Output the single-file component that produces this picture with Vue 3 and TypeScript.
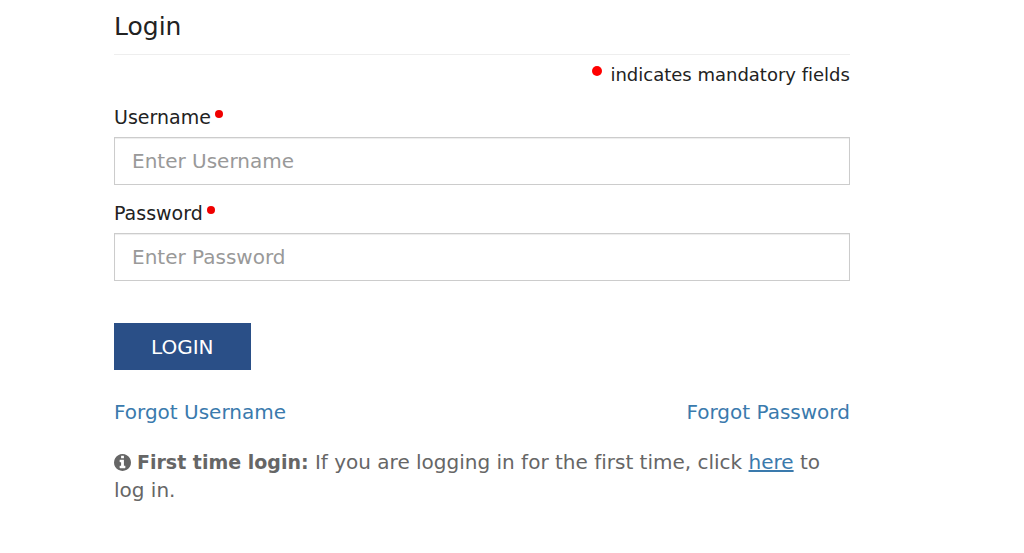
<script setup lang="ts">
import { ref } from 'vue'

const username = ref<string>('')
const password = ref<string>('')
</script>

<template>
  <main class="page">
    <form class="login" @submit.prevent>
      <h1 class="title">Login</h1>
      <p class="note"><span class="dot large"></span>indicates mandatory fields</p>

      <label class="label" for="username">Username<span class="dot"></span></label>
      <input id="username" v-model="username" class="field" type="text" placeholder="Enter Username" />

      <label class="label" for="password">Password<span class="dot"></span></label>
      <input id="password" v-model="password" class="field" type="password" placeholder="Enter Password" />

      <button class="submit" type="submit">LOGIN</button>

      <nav class="links">
        <a href="#">Forgot Username</a>
        <a href="#">Forgot Password</a>
      </nav>

      <p class="info">
        <svg class="icon" viewBox="0 0 1536 1536" aria-hidden="true">
          <path fill="currentColor" d="M1024 1248v-160q0-14-9-23t-23-9h-96V544q0-14-9-23t-23-9H544q-14 0-23 9t-9 23v160q0 14 9 23t23 9h96v320h-96q-14 0-23 9t-9 23v160q0 14 9 23t23 9h448q14 0 23-9t9-23zM896 352V192q0-14-9-23t-23-9H672q-14 0-23 9t-9 23v160q0 14 9 23t23 9h192q14 0 23-9t9-23zM1536 768q0 209-103 385.500T1153.500 1433 768 1536t-385.500-103T103 1153.500 0 768t103-385.500T382.500 103 768 0t385.500 103T1433 382.500 1536 768z" />
        </svg>
        <strong>First time login:</strong> If you are logging in for the first time, click <a href="#">here</a> to log in.
      </p>
    </form>
  </main>
</template>

<style>
body {
  margin: 0;
  background: #fff;
}
</style>

<style scoped>
.page {
  box-sizing: border-box;
  padding: 9px 17% 0 114px;
  font-family: "DejaVu Sans", Verdana, sans-serif;
  font-size: 20px;
  font-variant-ligatures: none;
  line-height: 28px;
  color: #222;
}

.login {
  display: flex;
  flex-direction: column;
}

.title {
  margin: 0;
  padding-bottom: 9px;
  border-bottom: 1px solid #eee;
  font-size: 25px;
  font-weight: 400;
  line-height: 36px;
}

.note {
  margin: 6px 0 0;
  text-align: right;
  font-size: 18px;
}

.dot {
  display: inline-block;
  width: 8px;
  height: 8px;
  margin-left: 4px;
  border-radius: 50%;
  background: #f00000;
  vertical-align: 6px;
}

.dot.large {
  width: 10px;
  height: 10px;
  margin: 0 8px 0 0;
  background: #f00;
  vertical-align: 5px;
}

.label {
  margin-top: 14px;
  font-size: 19px;
  line-height: 28px;
}

.field {
  box-sizing: border-box;
  width: 100%;
  height: 48px;
  margin-top: 6px;
  padding: 0 17px;
  border: 1px solid #ccc;
  border-radius: 0;
  background: #fff;
  box-shadow: inset 0 1px 1px rgba(0, 0, 0, 0.075);
  font: inherit;
  color: #555;
}

.field::placeholder {
  color: #999;
  opacity: 1;
}

.submit {
  align-self: flex-start;
  height: 47px;
  margin-top: 42px;
  padding: 0 37px;
  border: 0;
  background: #2a4f87;
  color: #fff;
  font: inherit;
}

.links {
  display: flex;
  justify-content: space-between;
  margin-top: 28px;
}

.links a {
  color: #3a7aad;
  text-decoration: none;
}

.info {
  margin: 22px 0 0;
  color: #666;
}

.info strong {
  font-size: 19px;
}

.info a {
  color: #3a7aad;
}

.icon {
  width: 17px;
  height: 17px;
  margin-right: 6px;
  vertical-align: -2px;
}
</style>
